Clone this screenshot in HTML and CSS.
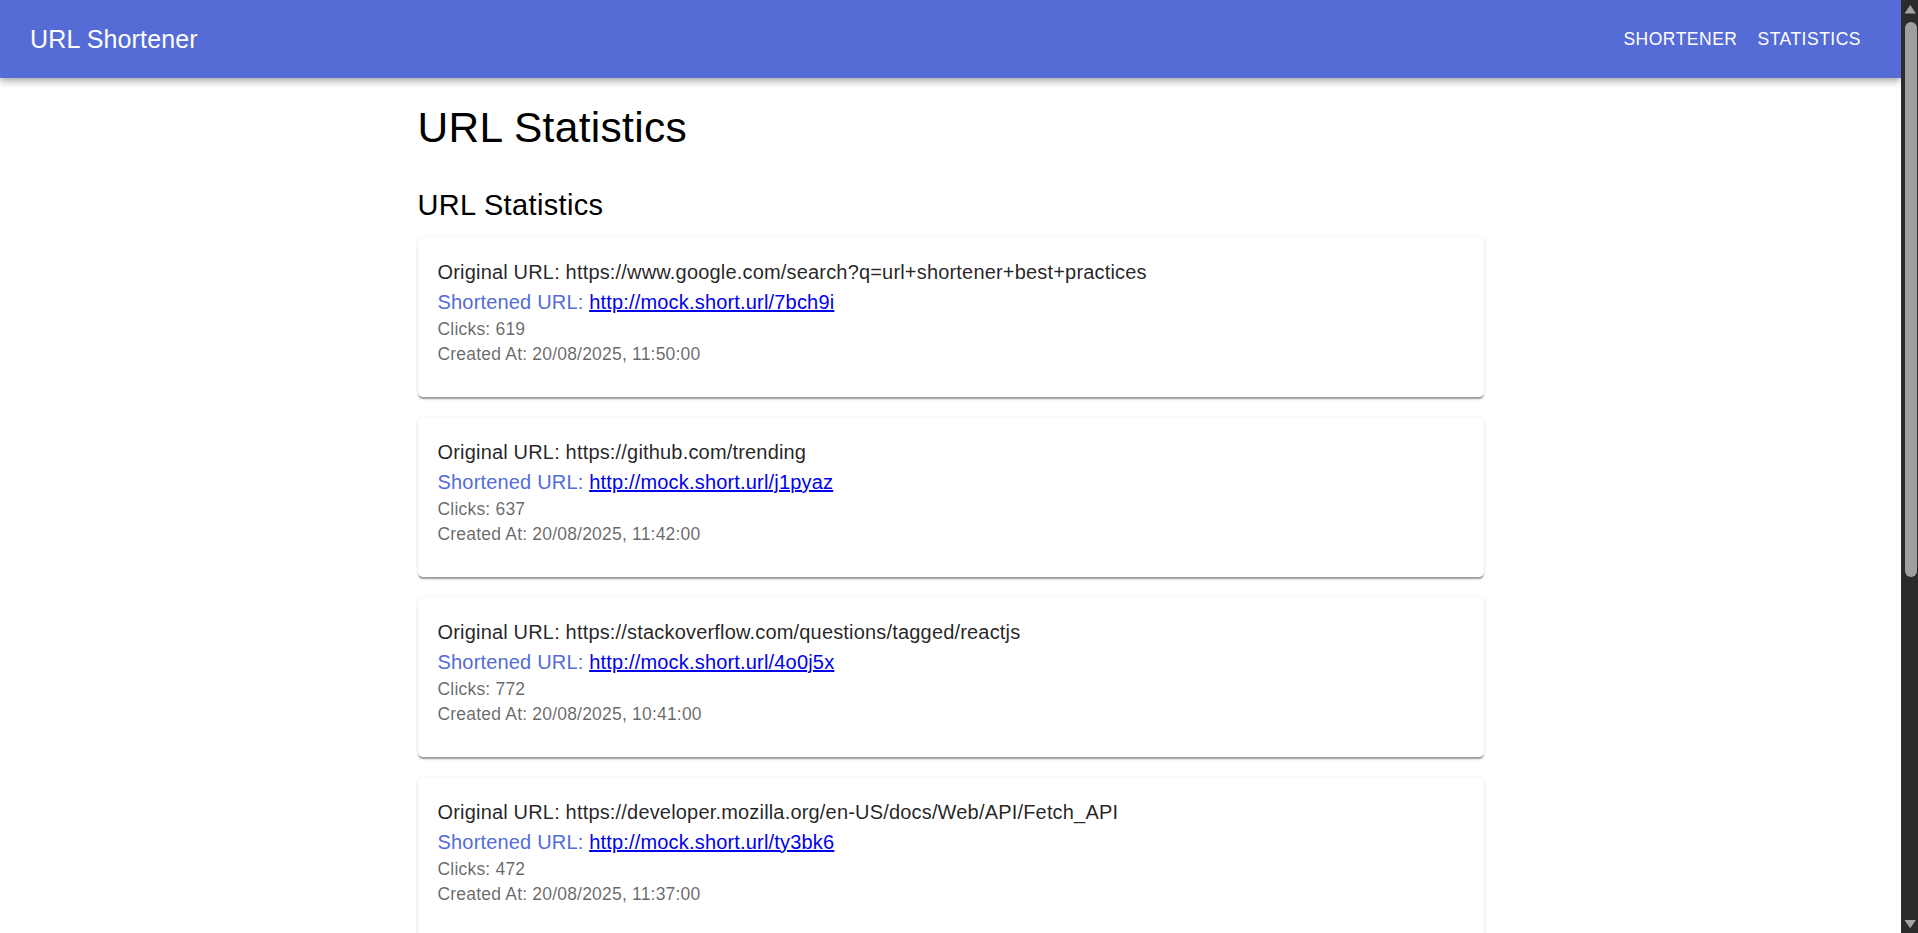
FILE: index.html
```html
<!DOCTYPE html>
<html lang="en">
<head>
<meta charset="utf-8">
<title>URL Shortener</title>
<link rel="stylesheet" href="styles.css">
</head>
<body>
<div class="frame">
  <div class="viewport">
    <header class="appbar">
      <div class="toolbar">
        <div class="brand">URL Shortener</div>
        <nav class="nav">
          <a class="nav-btn" href="#">Shortener</a>
          <a class="nav-btn" href="#">Statistics</a>
        </nav>
      </div>
    </header>
    <main class="container">
      <h1 class="page-title">URL Statistics</h1>
      <h2 class="section-title">URL Statistics</h2>
      <div class="card-list">
        <div class="card">
          <p class="line-main">Original URL: https://www.google.com/search?q=url+shortener+best+practices</p>
          <p class="line-main line-primary">Shortened URL: <a href="#">http://mock.short.url/7bch9i</a></p>
          <p class="line-meta">Clicks: 619</p>
          <p class="line-meta">Created At: 20/08/2025, 11:50:00</p>
        </div>
        <div class="card">
          <p class="line-main">Original URL: https://github.com/trending</p>
          <p class="line-main line-primary">Shortened URL: <a href="#">http://mock.short.url/j1pyaz</a></p>
          <p class="line-meta">Clicks: 637</p>
          <p class="line-meta">Created At: 20/08/2025, 11:42:00</p>
        </div>
        <div class="card">
          <p class="line-main">Original URL: https://stackoverflow.com/questions/tagged/reactjs</p>
          <p class="line-main line-primary">Shortened URL: <a href="#">http://mock.short.url/4o0j5x</a></p>
          <p class="line-meta">Clicks: 772</p>
          <p class="line-meta">Created At: 20/08/2025, 10:41:00</p>
        </div>
        <div class="card">
          <p class="line-main">Original URL: https://developer.mozilla.org/en-US/docs/Web/API/Fetch_API</p>
          <p class="line-main line-primary">Shortened URL: <a href="#">http://mock.short.url/ty3bk6</a></p>
          <p class="line-meta">Clicks: 472</p>
          <p class="line-meta">Created At: 20/08/2025, 11:37:00</p>
        </div>
      </div>
    </main>
  </div>
  <div class="scrollbar" aria-hidden="true">
    <svg class="sb-arrow" width="17" height="17" viewBox="0 0 17 17"><polygon points="3.5,13.5 9.2,5 14.9,13.5" fill="#a3a3a3"/></svg>
    <div class="sb-track"><div class="sb-thumb"></div></div>
    <svg class="sb-arrow" width="17" height="17" viewBox="0 0 17 17"><polygon points="3.5,4 9.2,12.2 14.9,4" fill="#a3a3a3"/></svg>
  </div>
</div>
</body>
</html>
```

FILE: styles.css
```css
html, body {
  margin: 0;
  padding: 0;
  height: 100%;
  overflow: hidden;
  background: #ffffff;
}

body {
  font-family: "Liberation Sans", Arial, sans-serif;
  color: rgba(0, 0, 0, 0.87);
}

.frame {
  display: flex;
  height: 100vh;
}

.viewport {
  flex: 1;
  min-width: 0;
  overflow: hidden;
}

.appbar {
  position: relative;
  z-index: 2;
  background: #556cd6;
  color: #ffffff;
  box-shadow: 0 2.5px 5px -1.25px rgba(0,0,0,0.2), 0 5px 6px 0 rgba(0,0,0,0.14), 0 1.25px 12px 0 rgba(0,0,0,0.12);
}

.toolbar {
  height: 78px;
  display: flex;
  align-items: center;
  padding: 0 30px;
}

.brand {
  flex: 1;
  font-size: 25px;
  line-height: 1.6;
  font-weight: 400;
  letter-spacing: 0.15px;
}

.nav {
  display: flex;
  align-items: center;
}

.nav-btn {
  color: #ffffff;
  text-decoration: none;
  text-transform: uppercase;
  font-size: 17.5px;
  letter-spacing: 0.5px;
  line-height: 30px;
  padding: 7.5px 10px;
}

.container {
  max-width: 1066px;
  margin: 0 auto;
  padding-top: 24px;
}

.page-title {
  margin: 0 0 31.5px;
  font-size: 42.5px;
  line-height: 52px;
  font-weight: 400;
  letter-spacing: 0.3px;
  color: #000;
}

.section-title {
  margin: 0 0 13.5px;
  font-size: 29px;
  line-height: 38px;
  font-weight: 400;
  letter-spacing: 0.35px;
  color: #000;
}

.card-list {
  display: flex;
  flex-direction: column;
  gap: 20px;
}

.card {
  background: #fff;
  border-radius: 5px;
  padding: 20px 20px 30px;
  box-shadow: 0 2.5px 1.25px -1.25px rgba(0,0,0,0.2), 0 1.25px 1.25px 0 rgba(0,0,0,0.14), 0 1.25px 3.75px 0 rgba(0,0,0,0.12);
}

.card p {
  margin: 0;
}

.line-main {
  font-size: 20px;
  line-height: 30px;
  letter-spacing: 0.18px;
  color: rgba(0, 0, 0, 0.87);
}

.line-primary {
  color: #556cd6;
}

.line-primary a {
  color: #0000ee;
  text-decoration: underline;
}

.line-meta {
  font-size: 17.5px;
  line-height: 25px;
  letter-spacing: 0.2px;
  color: rgba(0, 0, 0, 0.6);
}

.scrollbar {
  width: 17px;
  flex: none;
  background: #2b2b2b;
  display: flex;
  flex-direction: column;
}

.sb-arrow {
  display: block;
  flex: none;
}

.sb-track {
  flex: 1;
}

.sb-thumb {
  margin: 4.7px 0 0 4px;
  width: 11.5px;
  height: 555px;
  border-radius: 6px;
  background: #9f9f9f;
}
```
